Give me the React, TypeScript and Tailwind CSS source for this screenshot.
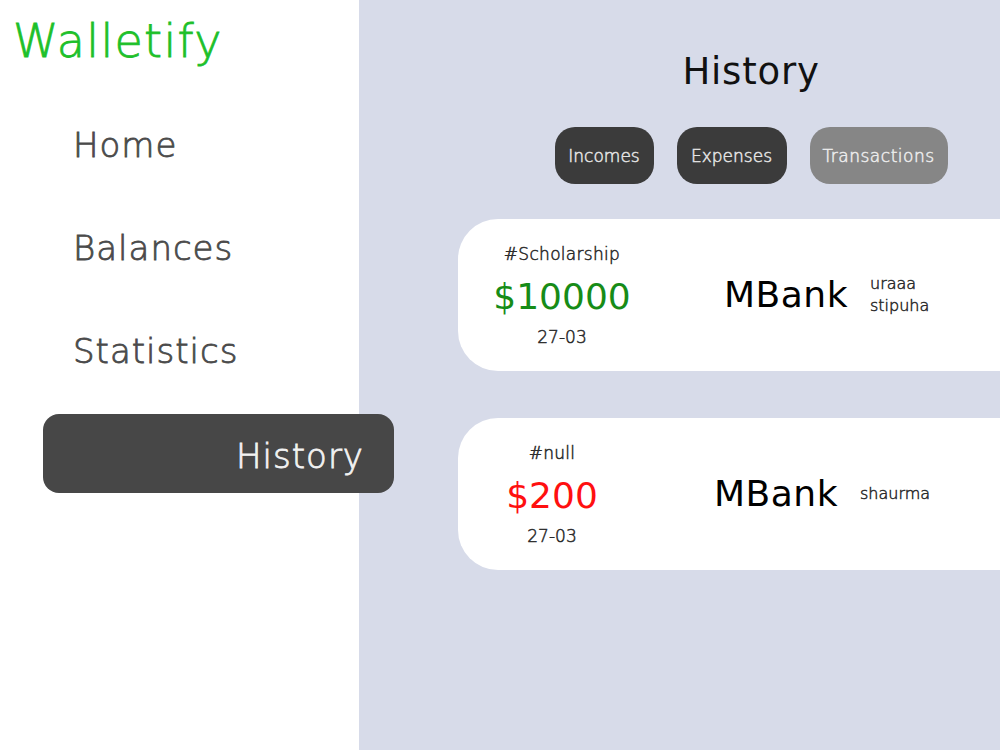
import React from "react";

const font = { fontFamily: '"DejaVu Sans", "Liberation Sans", sans-serif' };

type Card = {
  tag: string;
  amount: string;
  amountClass: string;
  date: string;
  bank: string;
  notes: string[];
  padClass: string;
};

const cards: Card[] = [
  {
    tag: "#Scholarship",
    amount: "$10000",
    amountClass: "text-[#178c17]",
    date: "27-03",
    bank: "MBank",
    notes: ["uraaa", "stipuha"],
    padClass: "pl-[24px]",
  },
  {
    tag: "#null",
    amount: "$200",
    amountClass: "text-[#ff1010]",
    date: "27-03",
    bank: "MBank",
    notes: ["shaurma"],
    padClass: "pl-[14px]",
  },
];

const thin = "font-extralight [-webkit-text-stroke:0.8px_currentColor]";
const thinSmall = "font-extralight [-webkit-text-stroke:0.5px_currentColor]";

export default function App() {
  return (
    <div className="flex w-[1000px] h-[750px] overflow-hidden bg-white" style={font}>
      <aside className="relative z-10 w-[359px] shrink-0 bg-white flex flex-col">
        <div className={`pl-[13px] pt-[16px] text-[46px] leading-[50px] text-[#1dc02a] tracking-[1.3px] ${thin}`}>
          Walletify
        </div>
        <nav className="mt-[40px] flex flex-col gap-[24px]">
          {["Home", "Balances", "Statistics"].map((n) => (
            <div
              key={n}
              className={`h-[79px] flex items-center pl-[73px] text-[34px] text-[#4a4a4a] tracking-[1px] ${thin}`}
            >
              {n}
            </div>
          ))}
          <div
            className={`ml-[43px] w-[351px] h-[79px] -mt-[1px] rounded-[16px] bg-[#474747] flex items-center justify-end pr-[30px] pt-[6px] text-[34px] text-[#f2f2f2] tracking-[1px] ${thin}`}
          >
            History
          </div>
        </nav>
      </aside>
      <main className="flex-1 bg-[#d7dbe9] overflow-hidden pl-[99px]">
        <div className="w-[586px] flex flex-col items-center">
          <h1 className="mt-[50px] h-[44px] flex items-center text-[37px] font-normal text-[#111] tracking-[0.8px]">
            History
          </h1>
          <div className="mt-[33px] flex gap-[23px]">
            <button className={`w-[99px] h-[57px] pt-[3px] rounded-[20px] bg-[#3b3b3b] text-[#e4e4e4] text-[17px] ${thinSmall}`}>
              Incomes
            </button>
            <button className={`w-[110px] h-[57px] pt-[3px] rounded-[20px] bg-[#3b3b3b] text-[#e4e4e4] text-[17px] ${thinSmall}`}>
              Expenses
            </button>
            <button className={`w-[138px] h-[57px] pt-[3px] rounded-[20px] bg-[#868686] text-[#ececec] text-[17px] tracking-[0.5px] ${thinSmall}`}>
              Transactions
            </button>
          </div>
          <div className="mt-[35px] w-full flex flex-col gap-[47px]">
            {cards.map((c, i) => (
              <div
                key={i}
                className={`h-[152px] w-full rounded-l-[40px] bg-white flex items-center ${c.padClass}`}
              >
                <div className="w-[160px] flex flex-col items-center">
                  <div className={`text-[17px] leading-[24px] text-[#2a2a2a] tracking-[0.3px] ${thinSmall}`}>{c.tag}</div>
                  <div className={`mt-[10px] text-[36px] leading-[42px] ${c.amountClass}`}>{c.amount}</div>
                  <div className={`mt-[7px] text-[17px] leading-[24px] text-[#2a2a2a] ${thinSmall}`}>{c.date}</div>
                </div>
                <div className="ml-[82px] text-[36px] leading-[42px] text-black tracking-[0.5px]">{c.bank}</div>
                <div className={`ml-[22px] flex flex-col text-[16px] leading-[22px] text-[#2a2a2a] ${thinSmall}`}>
                  {c.notes.map((n) => (
                    <span key={n}>{n}</span>
                  ))}
                </div>
              </div>
            ))}
          </div>
        </div>
      </main>
    </div>
  );
}
